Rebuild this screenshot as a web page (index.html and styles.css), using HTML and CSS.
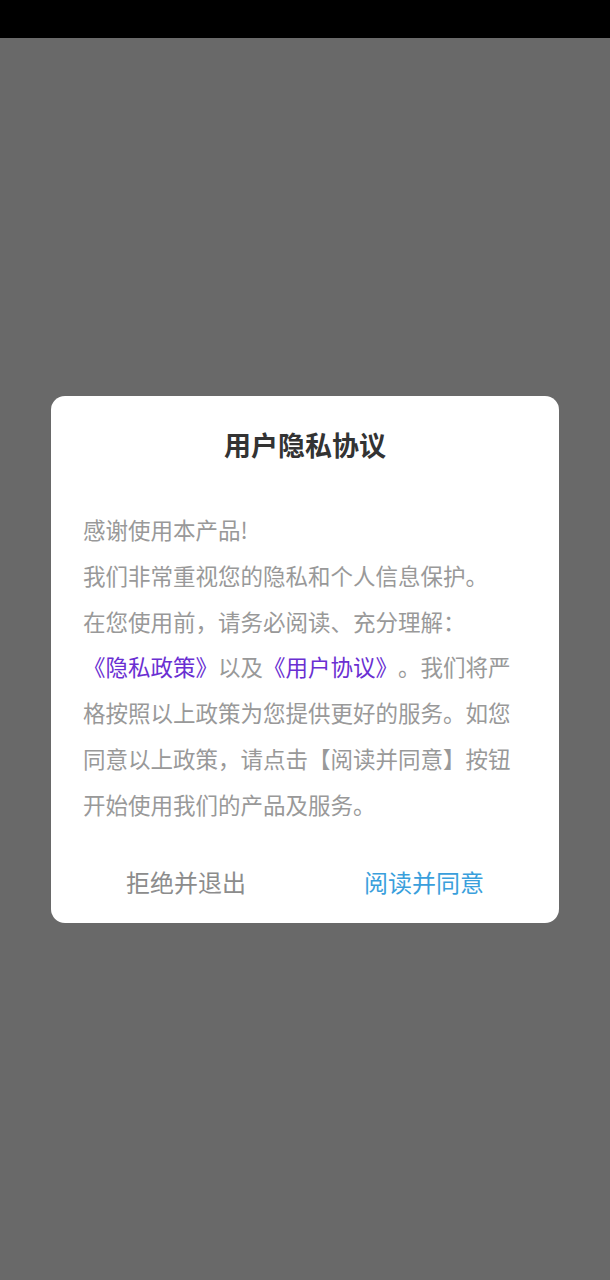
FILE: index.html
```html
<!DOCTYPE html>
<html lang="zh-CN">
<head>
<meta charset="utf-8">
<title>用户隐私协议</title>
<link rel="stylesheet" href="styles.css">
</head>
<body>
<div class="statusbar"></div>
<div class="overlay">
  <div class="dialog">
    <h1 class="title">用户隐私协议</h1>
    <p class="body">感谢使用本产品!<br>我们非常重视您的隐私和个人信息保护。<br>在您使用前，请务必阅读、充分理解：<br><span class="link">《隐私政策》</span>以及<span class="link">《用户协议》</span>。我们将严格按照以上政策为您提供更好的服务。如您同意以上政策，请点击【阅读并同意】按钮开始使用我们的产品及服务。</p>
    <div class="actions">
      <button class="btn btn-cancel">拒绝并退出</button>
      <button class="btn btn-ok">阅读并同意</button>
    </div>
  </div>
</div>
</body>
</html>
```
FILE: styles.css
```css
* { box-sizing: border-box; }
html, body { margin: 0; padding: 0; }
body {
  width: 610px;
  height: 1280px;
  background: #696969;
  font-family: "Noto Sans CJK SC", "Noto Sans", sans-serif;
  display: flex;
  flex-direction: column;
  text-spacing-trim: space-all;
}
.statusbar {
  height: 38px;
  background: #000;
  flex: none;
}
.overlay {
  flex: 1;
  display: flex;
  justify-content: center;
  padding-top: 358px;
}
.dialog {
  width: 508px;
  height: 527px;
  background: #fff;
  border-radius: 14px;
  padding: 31px 0 12px;
  display: flex;
  flex-direction: column;
  align-self: flex-start;
}
.title {
  margin: 0;
  font-size: 27px;
  line-height: 36px;
  font-weight: 700;
  color: #333;
  text-align: center;
}
.body {
  margin: 44px 32px 0;
  font-size: 22.5px;
  line-height: 45.8px;
  color: #999;
  text-spacing-trim: space-all;
}
.link {
  color: #6a2fd2;
}
.actions {
  margin-top: auto;
  padding: 0 16px;
  display: flex;
}
.btn {
  flex: 1;
  height: 60px;
  border: none;
  background: none;
  font-family: inherit;
  font-size: 24px;
  padding: 0;
  text-align: center;
}
.btn-cancel { color: #8c8c8c; }
.btn-ok { color: #3a9fdc; }
```
